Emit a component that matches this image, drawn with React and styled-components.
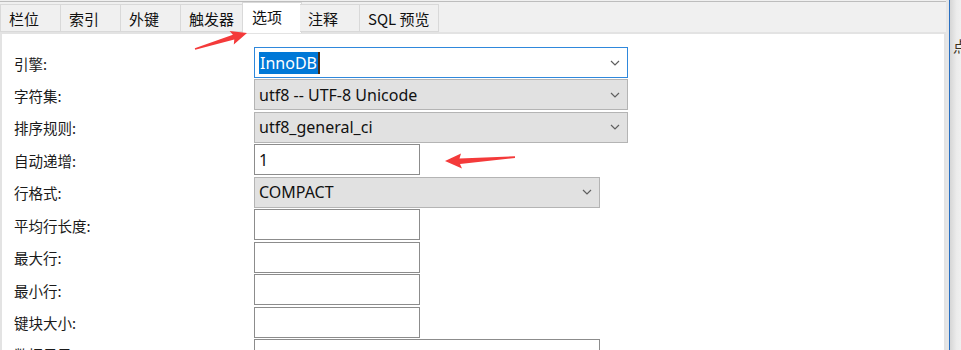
import React from "react"
import styled, { createGlobalStyle } from "styled-components"

const GlobalStyle = createGlobalStyle`
  html, body {
    margin: 0;
    padding: 0;
    background: #f0f0f0;
  }
  * {
    box-sizing: border-box;
  }
`

const Page = styled.div`
  display: flex;
  width: 961px;
  height: 350px;
  overflow: hidden;
  position: relative;
  font-family: "Noto Sans", "Noto Sans CJK SC", sans-serif;
`

const Main = styled.div`
  width: 946px;
  display: flex;
  flex-direction: column;
  background: #f0f0f0;
`

const TabBar = styled.div`
  margin-top: 1px;
  height: 33px;
  border-top: 1px solid #bdbdbd;
  display: flex;
  align-items: flex-end;
  position: relative;
  z-index: 2;
`

const Tab = styled.div`
  min-width: ${props => (props.first ? "61px" : "60px")};
  height: ${props => (props.active ? "31px" : "28px")};
  padding: ${props => (props.active ? "3px 8px 0 9px" : "1px 8px 0")};
  margin: ${props => (props.active ? "0 -2px -1px -1px" : "0")};
  display: flex;
  align-items: ${props => (props.active ? "flex-start" : "center")};
  background: ${props => (props.active ? "#ffffff" : "#f0f0f0")};
  border: 1px solid #d9d9d9;
  border-left: ${props => (props.first || props.active ? "1px solid #d9d9d9" : "none")};
  border-bottom: ${props => (props.active ? "none" : "1px solid #d9d9d9")};
  font-family: "Noto Sans CJK SC", sans-serif;
  font-size: 15px;
  color: #111;
  white-space: nowrap;
  position: relative;
`

const Panel = styled.div`
  flex: 1;
  background: #ffffff;
  border: 2px solid #e3e3e3;
  border-bottom: none;
  padding: 13px 0 0 12px;
`

const Form = styled.div`
  display: grid;
  grid-template-columns: 240px auto;
  grid-auto-rows: 31px;
  row-gap: 1.44px;
  justify-items: start;
  align-items: center;
`

const Label = styled.div`
  font-family: "Noto Sans CJK SC", sans-serif;
  font-size: 14.5px;
  color: #1a1a1a;
  padding-top: 1px;
`

const Select = styled.div`
  width: ${props => props.width}px;
  height: 31px;
  display: flex;
  align-items: center;
  justify-content: space-between;
  padding: 0 7px 0 4px;
  background: ${props => (props.focused ? "#ffffff" : "#e1e1e1")};
  border: 1px solid ${props => (props.focused ? "#2f88dc" : "#b4b4b4")};
  font-size: 16px;
  color: #111;
`

const Input = styled.div`
  width: ${props => props.width}px;
  height: 31px;
  display: flex;
  align-items: center;
  padding: 0 4px;
  background: #ffffff;
  border: 1px solid #8c8c8c;
  font-size: 16px;
  color: #111;
`

const Selected = styled.span`
  background: #0078d7;
  color: #ffffff;
  padding: 0 1px;
  line-height: 22px;
  border-right: 2px solid #4a2a10;
`

const Side = styled.div`
  width: 15px;
  border-left: 3px solid #e6e6e6;
  display: flex;
`

const SideInner = styled.div`
  flex: 1;
  border-left: 1px solid #2a6fc0;
  background: linear-gradient(to right, #d6d6d6, #ececec 60%, #f0f0f0);
  padding: 35px 0 0 3px;
  overflow: hidden;
  font-family: "Noto Sans CJK SC", sans-serif;
  font-size: 15px;
  color: #3a3020;
  white-space: nowrap;
`

const Overlay = styled.svg`
  position: absolute;
  left: 0;
  top: 0;
  pointer-events: none;
  z-index: 5;
`

const Chevron = () => (
  <svg width="10" height="6" viewBox="0 0 10 6">
    <polyline points="1,1 5,5 9,1" fill="none" stroke="#5f5f5f" strokeWidth="1.2" />
  </svg>
)

const tabs = ["栏位", "索引", "外键", "触发器", "选项", "注释", "SQL 预览"]

const rows = [
  { label: "引擎:", kind: "select", width: 374, focused: true, value: <Selected>InnoDB</Selected> },
  { label: "字符集:", kind: "select", width: 374, value: "utf8 -- UTF-8 Unicode" },
  { label: "排序规则:", kind: "select", width: 374, value: "utf8_general_ci" },
  { label: "自动递增:", kind: "input", width: 166, value: "1" },
  { label: "行格式:", kind: "select", width: 346, value: "COMPACT" },
  { label: "平均行长度:", kind: "input", width: 166 },
  { label: "最大行:", kind: "input", width: 166 },
  { label: "最小行:", kind: "input", width: 166 },
  { label: "键块大小:", kind: "input", width: 166 },
  { label: "数据目录:", kind: "input", width: 346 },
]

const App = () => (
  <>
    <GlobalStyle />
    <Page>
      <Main>
        <TabBar>
          {tabs.map((t, i) => (
            <Tab key={t} first={i === 0} active={t === "选项"}>
              {t}
            </Tab>
          ))}
        </TabBar>
        <Panel>
          <Form>
            {rows.map(r => (
              <React.Fragment key={r.label}>
                <Label>{r.label}</Label>
                {r.kind === "select" ? (
                  <Select width={r.width} focused={r.focused}>
                    <span>{r.value}</span>
                    <Chevron />
                  </Select>
                ) : (
                  <Input width={r.width}>{r.value}</Input>
                )}
              </React.Fragment>
            ))}
          </Form>
        </Panel>
      </Main>
      <Side>
        <SideInner>点</SideInner>
      </Side>
      <Overlay width="961" height="350">
        <polygon
          points="247,33 229.6,31 232.9,34.7 194.8,48.3 195.2,49.7 234.3,39.5 233.8,44.4"
          fill="#f43a3a"
        />
        <polygon
          points="445,161 461,153.5 459.5,158.5 515,156.2 515,158 460,164 462,168.5"
          fill="#f43a3a"
        />
      </Overlay>
    </Page>
  </>
)

export default App
